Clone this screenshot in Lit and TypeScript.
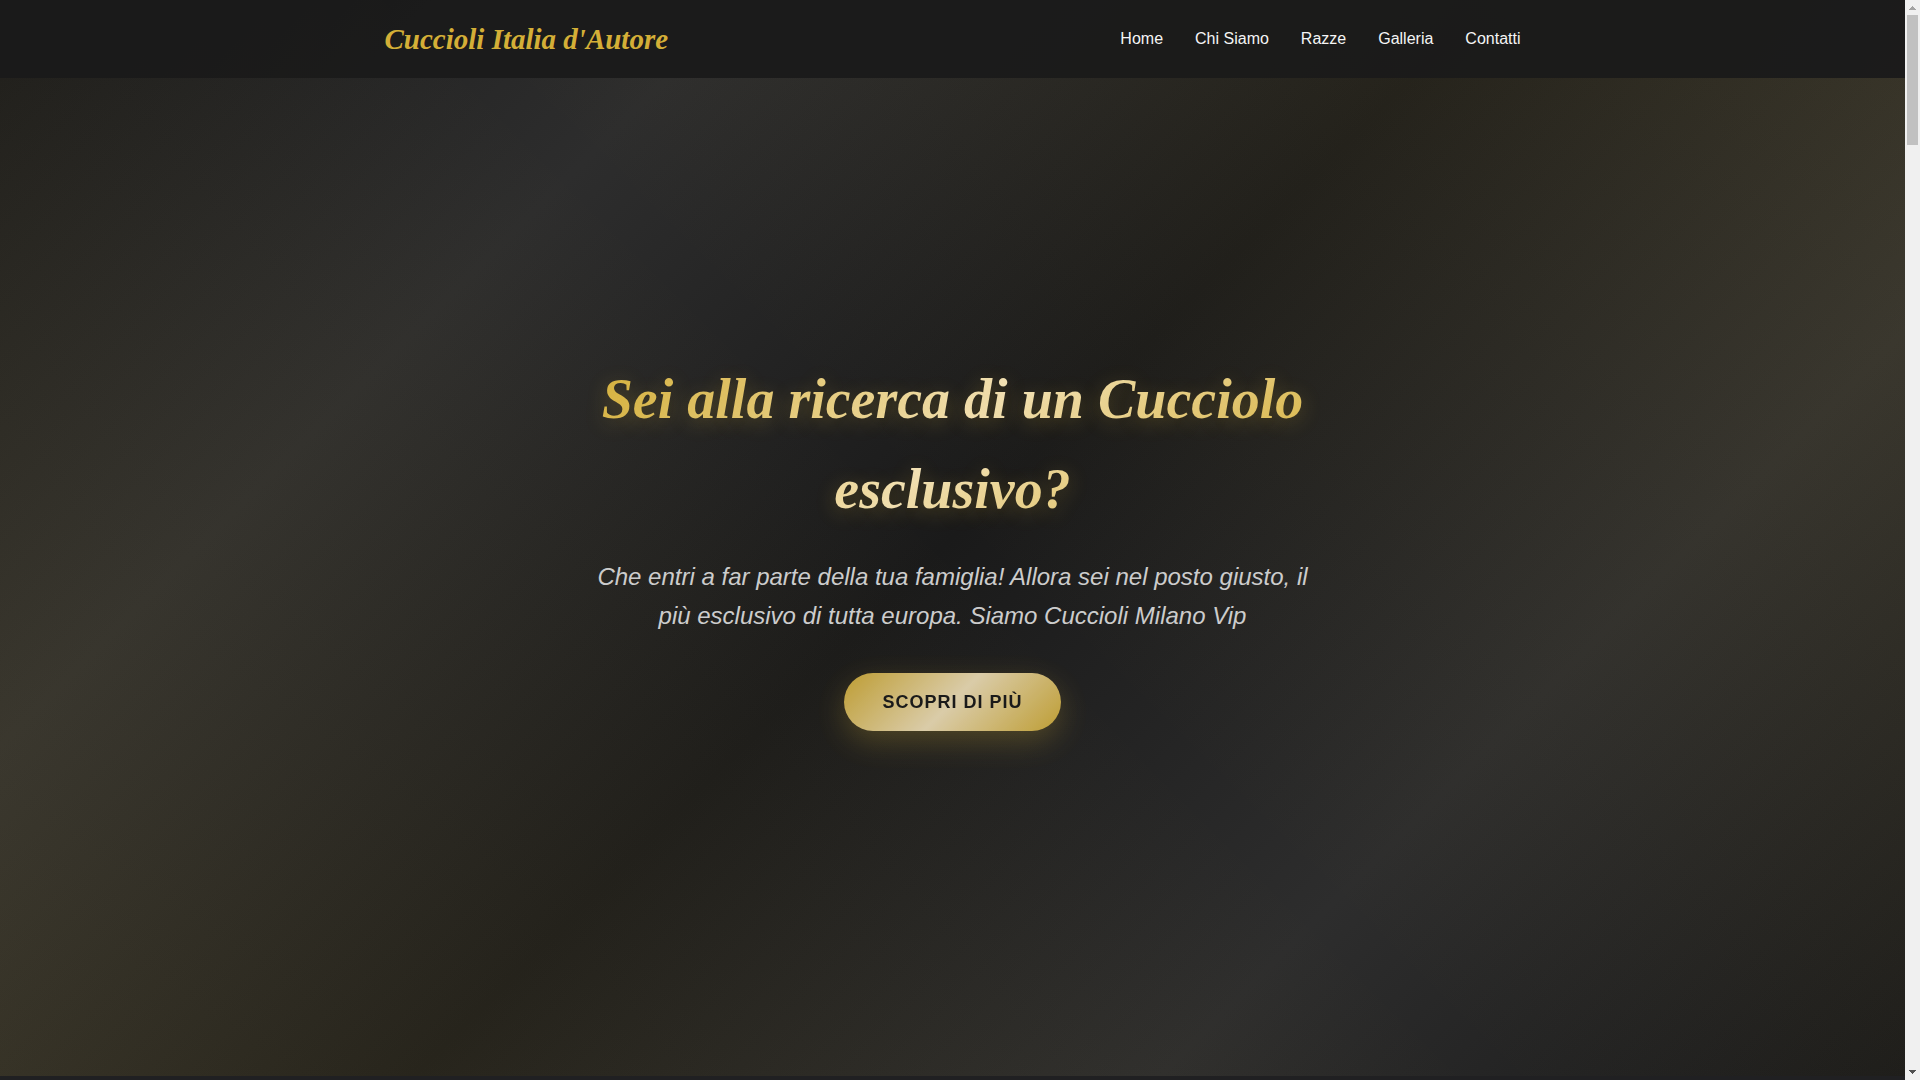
import { LitElement, html, css } from "lit";
import { customElement } from "lit/decorators.js";

const LINKS = [
  ["Home", "#home"],
  ["Chi Siamo", "#chi-siamo"],
  ["Razze", "#razze"],
  ["Galleria", "#galleria"],
  ["Contatti", "#contatti"],
];

@customElement("site-header")
export class SiteHeader extends LitElement {
  static styles = css`
    :host {
      display: block;
      background: rgba(26, 26, 26, 0.95);
    }
    .bar {
      box-sizing: border-box;
      max-width: 1200px;
      margin: 0 auto;
      padding: 16px 32px;
      display: flex;
      flex-wrap: wrap;
      align-items: center;
      justify-content: space-between;
    }
    .logo {
      font: italic bold 29px/46px "Liberation Serif", serif;
      color: #d4af37;
      text-decoration: none;
    }
    .menu {
      display: flex;
      gap: 32px;
      margin: 0;
      padding: 0;
      list-style: none;
    }
    .link {
      font: 16px/26px "Liberation Sans", sans-serif;
      color: #f5f5f5;
      text-decoration: none;
    }
  `;

  render() {
    return html`
      <div class="bar">
        <a class="logo" href="#home">Cuccioli Italia d'Autore</a>
        <nav>
          <ul class="menu">
            ${LINKS.map(([label, href]) => html`<li><a class="link" href=${href}>${label}</a></li>`)}
          </ul>
        </nav>
      </div>
    `;
  }
}

@customElement("hero-section")
export class HeroSection extends LitElement {
  static styles = css`
    :host {
      display: flex;
      align-items: center;
      justify-content: center;
      background:
        linear-gradient(45deg, rgba(212, 175, 55, 0.1), rgba(212, 175, 55, 0) 50%, rgba(212, 175, 55, 0.1)),
        linear-gradient(135deg, #1a1a1a 0%, #2d2d2d 25%, #1a1a1a 50%, #2d2d2d 75%, #1a1a1a 100%);
    }
    .content {
      box-sizing: border-box;
      max-width: 800px;
      padding: 9px 40px 0;
      text-align: center;
    }
    .title {
      margin: 0 0 23px;
      font: italic bold 56px/90px "Liberation Serif", serif;
      color: transparent;
      background: linear-gradient(135deg, #d4af37, #f4e4bc, #d4af37);
      background-clip: text;
      -webkit-background-clip: text;
      text-shadow: 0 4px 20px rgba(212, 175, 55, 0.3);
    }
    .lead {
      margin: 0 0 38px;
      font: italic 24px/39px "Liberation Sans", sans-serif;
      color: #cccccc;
    }
    .cta {
      padding: 15px 38px;
      border: 0;
      border-radius: 50px;
      font: bold 18px/28px "Liberation Sans", sans-serif;
      letter-spacing: 1px;
      text-transform: uppercase;
      color: #1a1a1a;
      background: linear-gradient(135deg, #d4af37, #f4e4bc, #d4af37);
      box-shadow: 0 10px 30px rgba(212, 175, 55, 0.3);
      opacity: 0.88;
      cursor: pointer;
    }
  `;

  render() {
    return html`
      <div class="content">
        <h1 class="title">Sei alla ricerca di un Cucciolo esclusivo?</h1>
        <p class="lead">
          Che entri a far parte della tua famiglia! Allora sei nel posto giusto, il più esclusivo di
          tutta europa. Siamo Cuccioli Milano Vip
        </p>
        <button class="cta" type="button">Scopri di più</button>
      </div>
    `;
  }
}

@customElement("app-root")
export class AppRoot extends LitElement {
  static styles = css`
    :host {
      display: grid;
      grid-template-columns: minmax(0, 1fr) 15px;
      min-height: 100vh;
      background: #1a1a1a;
    }
    .page {
      position: relative;
      display: grid;
      grid-template-rows: 1fr 4px;
    }
    .header {
      position: absolute;
      inset: 0 0 auto;
      z-index: 1;
    }
    .next {
      background: #202022;
    }
    .scroll {
      display: flex;
      flex-direction: column;
      align-items: center;
      background: #f0f0f0;
    }
    .arrow {
      display: block;
      width: 15px;
      height: 15px;
      flex: none;
    }
    .track {
      flex: 1;
      align-self: stretch;
      padding: 0 2px;
    }
    .thumb {
      height: 130px;
      background: #c1c1c1;
    }
  `;

  render() {
    return html`
      <div class="page">
        <site-header class="header"></site-header>
        <hero-section></hero-section>
        <div class="next"></div>
      </div>
      <div class="scroll" aria-hidden="true">
        <svg class="arrow" viewBox="0 0 15 15" shape-rendering="crispEdges">
          <path fill="#a3a3a3" d="M7 6h1v1h1v1h1v1h1v1H4V9h1V8h1V7h1z" />
        </svg>
        <div class="track"><div class="thumb"></div></div>
        <svg class="arrow" viewBox="0 0 15 15" shape-rendering="crispEdges">
          <path fill="#505050" d="M4 5h7v1h-1v1H9v1H8v1H7V8H6V7H5V6H4z" />
        </svg>
      </div>
    `;
  }
}
